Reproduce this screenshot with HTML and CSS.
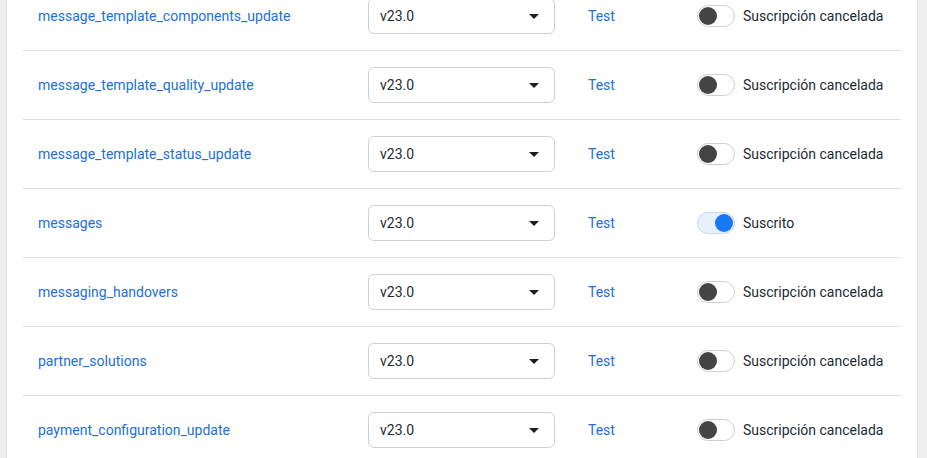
FILE: index.html
```html
<!DOCTYPE html>
<html lang="es">
<head>
<meta charset="utf-8">
<link rel="stylesheet" href="styles.css">
</head>
<body>
<div class="card">
  <div class="list">
    <div class="row">
      <a class="field">message_template_components_update</a>
      <div class="version"><div class="select"><span>v23.0</span><span class="caret"></span></div></div>
      <a class="test">Test</a>
      <div class="status"><span class="toggle"><span class="knob"></span></span><span>Suscripción cancelada</span></div>
    </div>
    <div class="row">
      <a class="field">message_template_quality_update</a>
      <div class="version"><div class="select"><span>v23.0</span><span class="caret"></span></div></div>
      <a class="test">Test</a>
      <div class="status"><span class="toggle"><span class="knob"></span></span><span>Suscripción cancelada</span></div>
    </div>
    <div class="row">
      <a class="field">message_template_status_update</a>
      <div class="version"><div class="select"><span>v23.0</span><span class="caret"></span></div></div>
      <a class="test">Test</a>
      <div class="status"><span class="toggle"><span class="knob"></span></span><span>Suscripción cancelada</span></div>
    </div>
    <div class="row">
      <a class="field">messages</a>
      <div class="version"><div class="select"><span>v23.0</span><span class="caret"></span></div></div>
      <a class="test">Test</a>
      <div class="status"><span class="toggle on"><span class="knob"></span></span><span>Suscrito</span></div>
    </div>
    <div class="row">
      <a class="field">messaging_handovers</a>
      <div class="version"><div class="select"><span>v23.0</span><span class="caret"></span></div></div>
      <a class="test">Test</a>
      <div class="status"><span class="toggle"><span class="knob"></span></span><span>Suscripción cancelada</span></div>
    </div>
    <div class="row">
      <a class="field">partner_solutions</a>
      <div class="version"><div class="select"><span>v23.0</span><span class="caret"></span></div></div>
      <a class="test">Test</a>
      <div class="status"><span class="toggle"><span class="knob"></span></span><span>Suscripción cancelada</span></div>
    </div>
    <div class="row">
      <a class="field">payment_configuration_update</a>
      <div class="version"><div class="select"><span>v23.0</span><span class="caret"></span></div></div>
      <a class="test">Test</a>
      <div class="status"><span class="toggle"><span class="knob"></span></span><span>Suscripción cancelada</span></div>
    </div>
  </div>
</div>
</body>
</html>
```
FILE: styles.css
```css
html, body {
  margin: 0;
  padding: 0;
  height: 100%;
  overflow: hidden;
}
body {
  background: #efefef;
  font-family: Roboto, "Liberation Sans", Arial, sans-serif;
  font-size: 14px;
  color: #1c2b33;
  padding: 0 10px 0 7px;
}
.card {
  display: flow-root;
  background: #fff;
  height: 100%;
  padding: 0 16px;
  box-shadow: -1px 0 0 #e2e2e2, 1px 0 0 #e6e6e6;
}
.list {
  margin-top: -18px;
}
.row {
  display: flex;
  align-items: center;
  height: 68px;
  border-bottom: 1px solid #dadde1;
  padding-left: 15px;
}
.field {
  width: 330px;
  color: #216fdb;
  text-decoration: none;
}
.version {
  width: 220px;
}
.select {
  border: 1px solid #ccd0d5;
  border-radius: 6px;
  display: flex;
  align-items: center;
  justify-content: space-between;
  padding: 0 15px 0 11px;
  box-sizing: border-box;
  width: 187px;
  height: 36px;
}
.caret {
  width: 0;
  height: 0;
  border-left: 5px solid transparent;
  border-right: 5px solid transparent;
  border-top: 5px solid #1c1e21;
  margin-top: 1px;
}
.test {
  width: 109px;
  color: #216fdb;
  text-decoration: none;
}
.status {
  display: flex;
  align-items: center;
  gap: 8px;
}
.toggle {
  width: 38px;
  height: 22px;
  box-sizing: border-box;
  border: 1px solid #ccd0d5;
  border-radius: 11px;
  background: #fff;
  display: flex;
  align-items: center;
  padding: 0 1px;
}
.knob {
  width: 18px;
  height: 18px;
  border-radius: 50%;
  background: #444444;
}
.toggle.on {
  background: #e7f0fd;
  border-color: #c9d8ee;
  justify-content: flex-end;
}
.toggle.on .knob {
  background: #1877f2;
}
```
